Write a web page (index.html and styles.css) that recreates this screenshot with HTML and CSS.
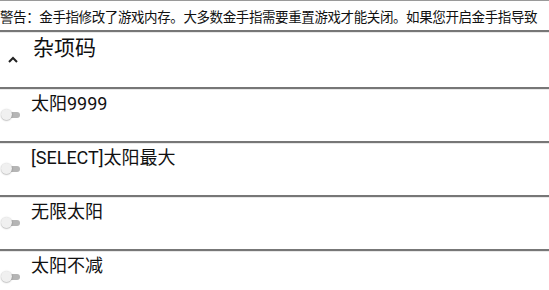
FILE: index.html
```html
<!DOCTYPE html>
<html lang="zh">
<head>
    <meta charset="utf-8">
    <title>金手指</title>
    <link rel="stylesheet" href="styles.css">
</head>
<body>

<div class="warning">警告：金手指修改了游戏内存。大多数金手指需要重置游戏才能关闭。如果您开启金手指导致</div>

<div class="group-head">
    <svg class="chevron" width="12" height="8" viewBox="0 0 12 8">
        <path d="M2 7 L6 3 L10 7" fill="none" stroke="#222" stroke-width="2"/>
    </svg>
    <span class="group-title">杂项码</span>
</div>

<ul class="cheats">
    <li class="cheat"><span class="toggle"></span><span class="cheat-name">太阳9999</span></li>
    <li class="cheat"><span class="toggle"></span><span class="cheat-name">[SELECT]太阳最大</span></li>
    <li class="cheat"><span class="toggle"></span><span class="cheat-name">无限太阳</span></li>
    <li class="cheat"><span class="toggle"></span><span class="cheat-name">太阳不减</span></li>
</ul>

</body>
</html>
```

FILE: styles.css
```css
* {
    margin: 0;
    padding: 0;
    box-sizing: border-box;
}

html,
body {
    width: 549px;
    height: 290px;
    overflow: hidden;
}

body {
    background: #fff;
    font-family: Roboto, "Noto Sans CJK SC", sans-serif;
    color: #111;
}

.warning {
    height: 32px;
    padding-top: 8px;
    font-size: 13.5px;
    line-height: 16px;
    letter-spacing: -0.4px;
    white-space: nowrap;
    border-top: 1px solid #9a9a9a;
    border-bottom: 2px solid #777;
    box-shadow: 0 1px 0 #e8e8e8;
}

.group-head {
    height: 57px;
    display: flex;
    align-items: flex-start;
    border-bottom: 2px solid #777;
    box-shadow: 0 1px 0 #e8e8e8;
}

.chevron {
    margin: 23px 0 0 7px;
}

.group-title {
    margin: 2px 0 0 14px;
    font-size: 21px;
    line-height: 28px;
}

.cheats {
    list-style: none;
}

.cheat {
    height: 54px;
    display: flex;
    align-items: flex-start;
    border-bottom: 2px solid #777;
    box-shadow: 0 1px 0 #e8e8e8;
}

.toggle {
    position: relative;
    width: 19px;
    height: 11px;
    margin: 20px 0 0 1px;
}

.toggle::before {
    content: "";
    position: absolute;
    left: 8px;
    top: 3px;
    width: 11px;
    height: 6px;
    border-radius: 3px;
    background: #b5b5b5;
}

.toggle::after {
    content: "";
    position: absolute;
    left: 0;
    top: 0;
    width: 11px;
    height: 11px;
    border-radius: 50%;
    background: #f0f0f0;
    box-shadow: 0 0.5px 1.5px rgba(0, 0, 0, 0.4);
}

.cheat-name {
    margin: 4px 0 0 11px;
    font-size: 18px;
    line-height: 22px;
}
```
